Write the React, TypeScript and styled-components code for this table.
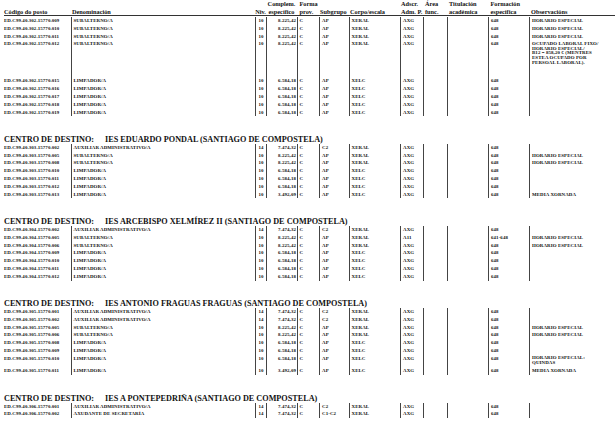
import * as React from 'react'
import styled, { createGlobalStyle } from 'styled-components'

const COLS = '67px 184px 11px 31px 22px 30px 51px 23px 24px 41px 41px 1fr'
const ROW_H = 7.8
const SERIF = `"Liberation Serif", "DejaVu Serif", "Times New Roman", serif`

type Align = 'left' | 'center' | 'right'

interface IColumn {
    align: Align
    pad: number
}

// padding + alignment for each column, in the order of COLS
const columns: IColumn[] = [
    { align: 'left', pad: 0 },
    { align: 'left', pad: 1.5 },
    { align: 'center', pad: 0 },
    { align: 'right', pad: 1 },
    { align: 'left', pad: 1.5 },
    { align: 'left', pad: 2 },
    { align: 'left', pad: 1.5 },
    { align: 'left', pad: 2 },
    { align: 'left', pad: 2 },
    { align: 'left', pad: 2 },
    { align: 'left', pad: 2 },
    { align: 'left', pad: 2 },
]

const headers: { lines: string[], align: Align, pad: number }[] = [
    { lines: ['Código do posto'], align: 'left', pad: 0 },
    { lines: ['Denominación'], align: 'left', pad: 1 },
    { lines: ['Niv.'], align: 'center', pad: 0 },
    { lines: ['Complem.', 'específico'], align: 'center', pad: 0 },
    { lines: ['Forma', 'prov.'], align: 'left', pad: 2.5 },
    { lines: ['Subgrupo'], align: 'left', pad: 1 },
    { lines: ['Corpo/escala'], align: 'left', pad: 1 },
    { lines: ['Adscr.', 'Adm. P.'], align: 'left', pad: 1 },
    { lines: ['Área', 'func.'], align: 'left', pad: 2 },
    { lines: ['Titulación', 'académica'], align: 'left', pad: 2 },
    { lines: ['Formación', 'específica'], align: 'left', pad: 2.5 },
    { lines: ['Observacións'], align: 'left', pad: 2 },
]

interface IPost {
    code: string
    name: string
    level: string
    amount: string
    group: string
    corps: string
    adscr?: string
    training?: string
    obs?: string[]
    height?: number
}

interface ISection {
    centre?: string
    posts: IPost[]
}

const SUB = { name: 'SUBALTERNO/A', level: '10', amount: '8.225,42', group: 'AP', corps: 'XERAL' }
const LIMP = { name: 'LIMPADOR/A', level: '10', amount: '6.584,18', group: 'AP', corps: 'XELC' }
const HALF = { name: 'LIMPADOR/A', level: '10', amount: '3.492,09', group: 'AP', corps: 'XELC', obs: ['MEDIA XORNADA'] }
const AUX = { name: 'AUXILIAR ADMINISTRATIVO/A', level: '14', amount: '7.474,32', group: 'C2', corps: 'XERAL' }
const HOR = ['HORARIO ESPECIAL']

const sections: ISection[] = [
    {
        posts: [
            { code: 'ED.C99.40.302.15770.009', ...SUB, obs: HOR },
            { code: 'ED.C99.40.302.15770.010', ...SUB, obs: HOR },
            { code: 'ED.C99.40.302.15770.011', ...SUB, obs: HOR },
            {
                code: 'ED.C99.40.302.15770.012', ...SUB, height: 37,
                obs: ['OCUPADO LABORAL FIXO/', 'HORARIO ESPECIAL/', 'B12 = 858,20 € (MENTRES', 'ESTEA OCUPADO POR', 'PERSOAL LABORAL).'],
            },
            { code: 'ED.C99.40.302.15770.015', ...LIMP },
            { code: 'ED.C99.40.302.15770.016', ...LIMP },
            { code: 'ED.C99.40.302.15770.017', ...LIMP },
            { code: 'ED.C99.40.302.15770.018', ...LIMP },
            { code: 'ED.C99.40.302.15770.019', ...LIMP },
        ],
    },
    {
        centre: 'IES EDUARDO PONDAL (SANTIAGO DE COMPOSTELA)',
        posts: [
            { code: 'ED.C99.40.303.15770.002', ...AUX },
            { code: 'ED.C99.40.303.15770.005', ...SUB, obs: HOR },
            { code: 'ED.C99.40.303.15770.008', ...SUB, obs: HOR },
            { code: 'ED.C99.40.303.15770.010', ...LIMP },
            { code: 'ED.C99.40.303.15770.011', ...LIMP },
            { code: 'ED.C99.40.303.15770.012', ...LIMP },
            { code: 'ED.C99.40.303.15770.013', ...HALF },
        ],
    },
    {
        centre: 'IES ARCEBISPO XELMÍREZ II (SANTIAGO DE COMPOSTELA)',
        posts: [
            { code: 'ED.C99.40.304.15770.002', ...AUX },
            { code: 'ED.C99.40.304.15770.005', ...SUB, adscr: 'A11', training: '641-648', obs: HOR },
            { code: 'ED.C99.40.304.15770.006', ...SUB, obs: HOR },
            { code: 'ED.C99.40.304.15770.009', ...LIMP },
            { code: 'ED.C99.40.304.15770.010', ...LIMP },
            { code: 'ED.C99.40.304.15770.011', ...LIMP },
            { code: 'ED.C99.40.304.15770.012', ...LIMP },
        ],
    },
    {
        centre: 'IES ANTONIO FRAGUAS FRAGUAS (SANTIAGO DE COMPOSTELA)',
        posts: [
            { code: 'ED.C99.40.305.15770.001', ...AUX },
            { code: 'ED.C99.40.305.15770.002', ...AUX },
            { code: 'ED.C99.40.305.15770.005', ...SUB, obs: HOR },
            { code: 'ED.C99.40.305.15770.006', ...SUB, obs: HOR },
            { code: 'ED.C99.40.305.15770.008', ...LIMP },
            { code: 'ED.C99.40.305.15770.009', ...LIMP },
            { code: 'ED.C99.40.305.15770.010', ...LIMP, height: 12.5, obs: ['HORARIO ESPECIAL:', 'QUINDAS'] },
            { code: 'ED.C99.40.305.15770.011', ...HALF },
        ],
    },
    {
        centre: 'IES A PONTEPEDRIÑA (SANTIAGO DE COMPOSTELA)',
        posts: [
            { code: 'ED.C99.40.306.15770.001', ...AUX },
            { code: 'ED.C99.40.306.15770.002', ...AUX, name: 'AXUDANTE DE SECRETARÍA', group: 'C1-C2' },
        ],
    },
]

const GlobalStyle = createGlobalStyle`
    html, body {
        margin: 0;
        padding: 0;
        background: #fff;
    }
    body {
        font-family: ${SERIF};
        color: #111;
    }
`

export default class App extends React.Component {
    public renderPost = (post: IPost): React.ReactElement<'div'> => {
        const values = [
            post.code, post.name, post.level, post.amount, 'C', post.group, post.corps,
            post.adscr || 'AXG', '', '', post.training || '648',
        ]
        const obs = post.obs || []
        return (
            <Row key={post.code} $height={post.height || ROW_H}>
                {values.map((v, i) => (
                    <Cell key={i} $first={i === 0} $align={columns[i].align} $pad={columns[i].pad}>{v}</Cell>
                ))}
                <ObsCell $multi={obs.length > 1}>
                    {obs.map((line, i) => <div key={i}>{line}</div>)}
                </ObsCell>
            </Row>
        )
    }

    public render() {
        return (
            <Page>
                <GlobalStyle />
                <HeaderRow>
                    {headers.map((h, i) => (
                        <HeaderCell key={i} $align={h.align} $pad={h.pad}>
                            {h.lines.map((l, j) => <div key={j}>{l}</div>)}
                        </HeaderCell>
                    ))}
                </HeaderRow>
                {sections.map((s, i) => (
                    <Section key={i}>
                        {s.centre && (
                            <Heading>
                                <span>CENTRO DE DESTINO:</span>
                                {s.centre}
                            </Heading>
                        )}
                        <Table>{s.posts.map(this.renderPost)}</Table>
                    </Section>
                ))}
            </Page>
        )
    }
}

const Page = styled.div`
    width: 611px;
    height: 439px;
    padding-left: 4px;
    overflow: hidden;
    font-family: ${SERIF};
    color: #111;
`

const HeaderRow = styled.div`
    display: grid;
    grid-template-columns: ${COLS};
    align-items: end;
    height: 15px;
    border-bottom: 1px solid #333;
    margin-bottom: 1px;
`

const HeaderCell = styled.div<{ $align: Align, $pad: number }>`
    font-family: ${SERIF};
    font-size: 6.3px;
    font-weight: bold;
    line-height: 7.5px;
    white-space: nowrap;
    text-align: ${props => props.$align};
    padding-left: ${props => props.$pad}px;
    padding-bottom: 0.5px;
`

const Section = styled.section`
    display: flex;
    flex-direction: column;
`

const Heading = styled.h2`
    margin: 18.5px 0 0;
    font-family: ${SERIF};
    font-size: 8.2px;
    line-height: 9px;
    font-weight: bold;
    white-space: nowrap;

    span {
        margin-right: 11px;
    }
`

const Table = styled.div`
    display: flex;
    flex-direction: column;
`

const Row = styled.div<{ $height: number }>`
    display: grid;
    grid-template-columns: ${COLS};
    height: ${props => props.$height}px;
    font-family: ${SERIF};
    font-size: 4.9px;
    letter-spacing: 0.1px;
    font-weight: bold;
`

const Cell = styled.div<{ $first: boolean, $align: Align, $pad: number }>`
    line-height: ${ROW_H}px;
    white-space: nowrap;
    border-left: ${props => props.$first ? 'none' : '1px solid #444'};
    text-align: ${props => props.$align};
    padding-left: ${props => props.$align === 'right' ? 0 : props.$pad}px;
    padding-right: ${props => props.$align === 'right' ? props.$pad : 0}px;
`

const ObsCell = styled.div<{ $multi: boolean }>`
    border-left: 1px solid #444;
    padding-left: 2px;
    white-space: nowrap;
    line-height: ${props => props.$multi ? '4.7px' : `${ROW_H}px`};
    padding-top: ${props => props.$multi ? 1.6 : 0}px;
`
